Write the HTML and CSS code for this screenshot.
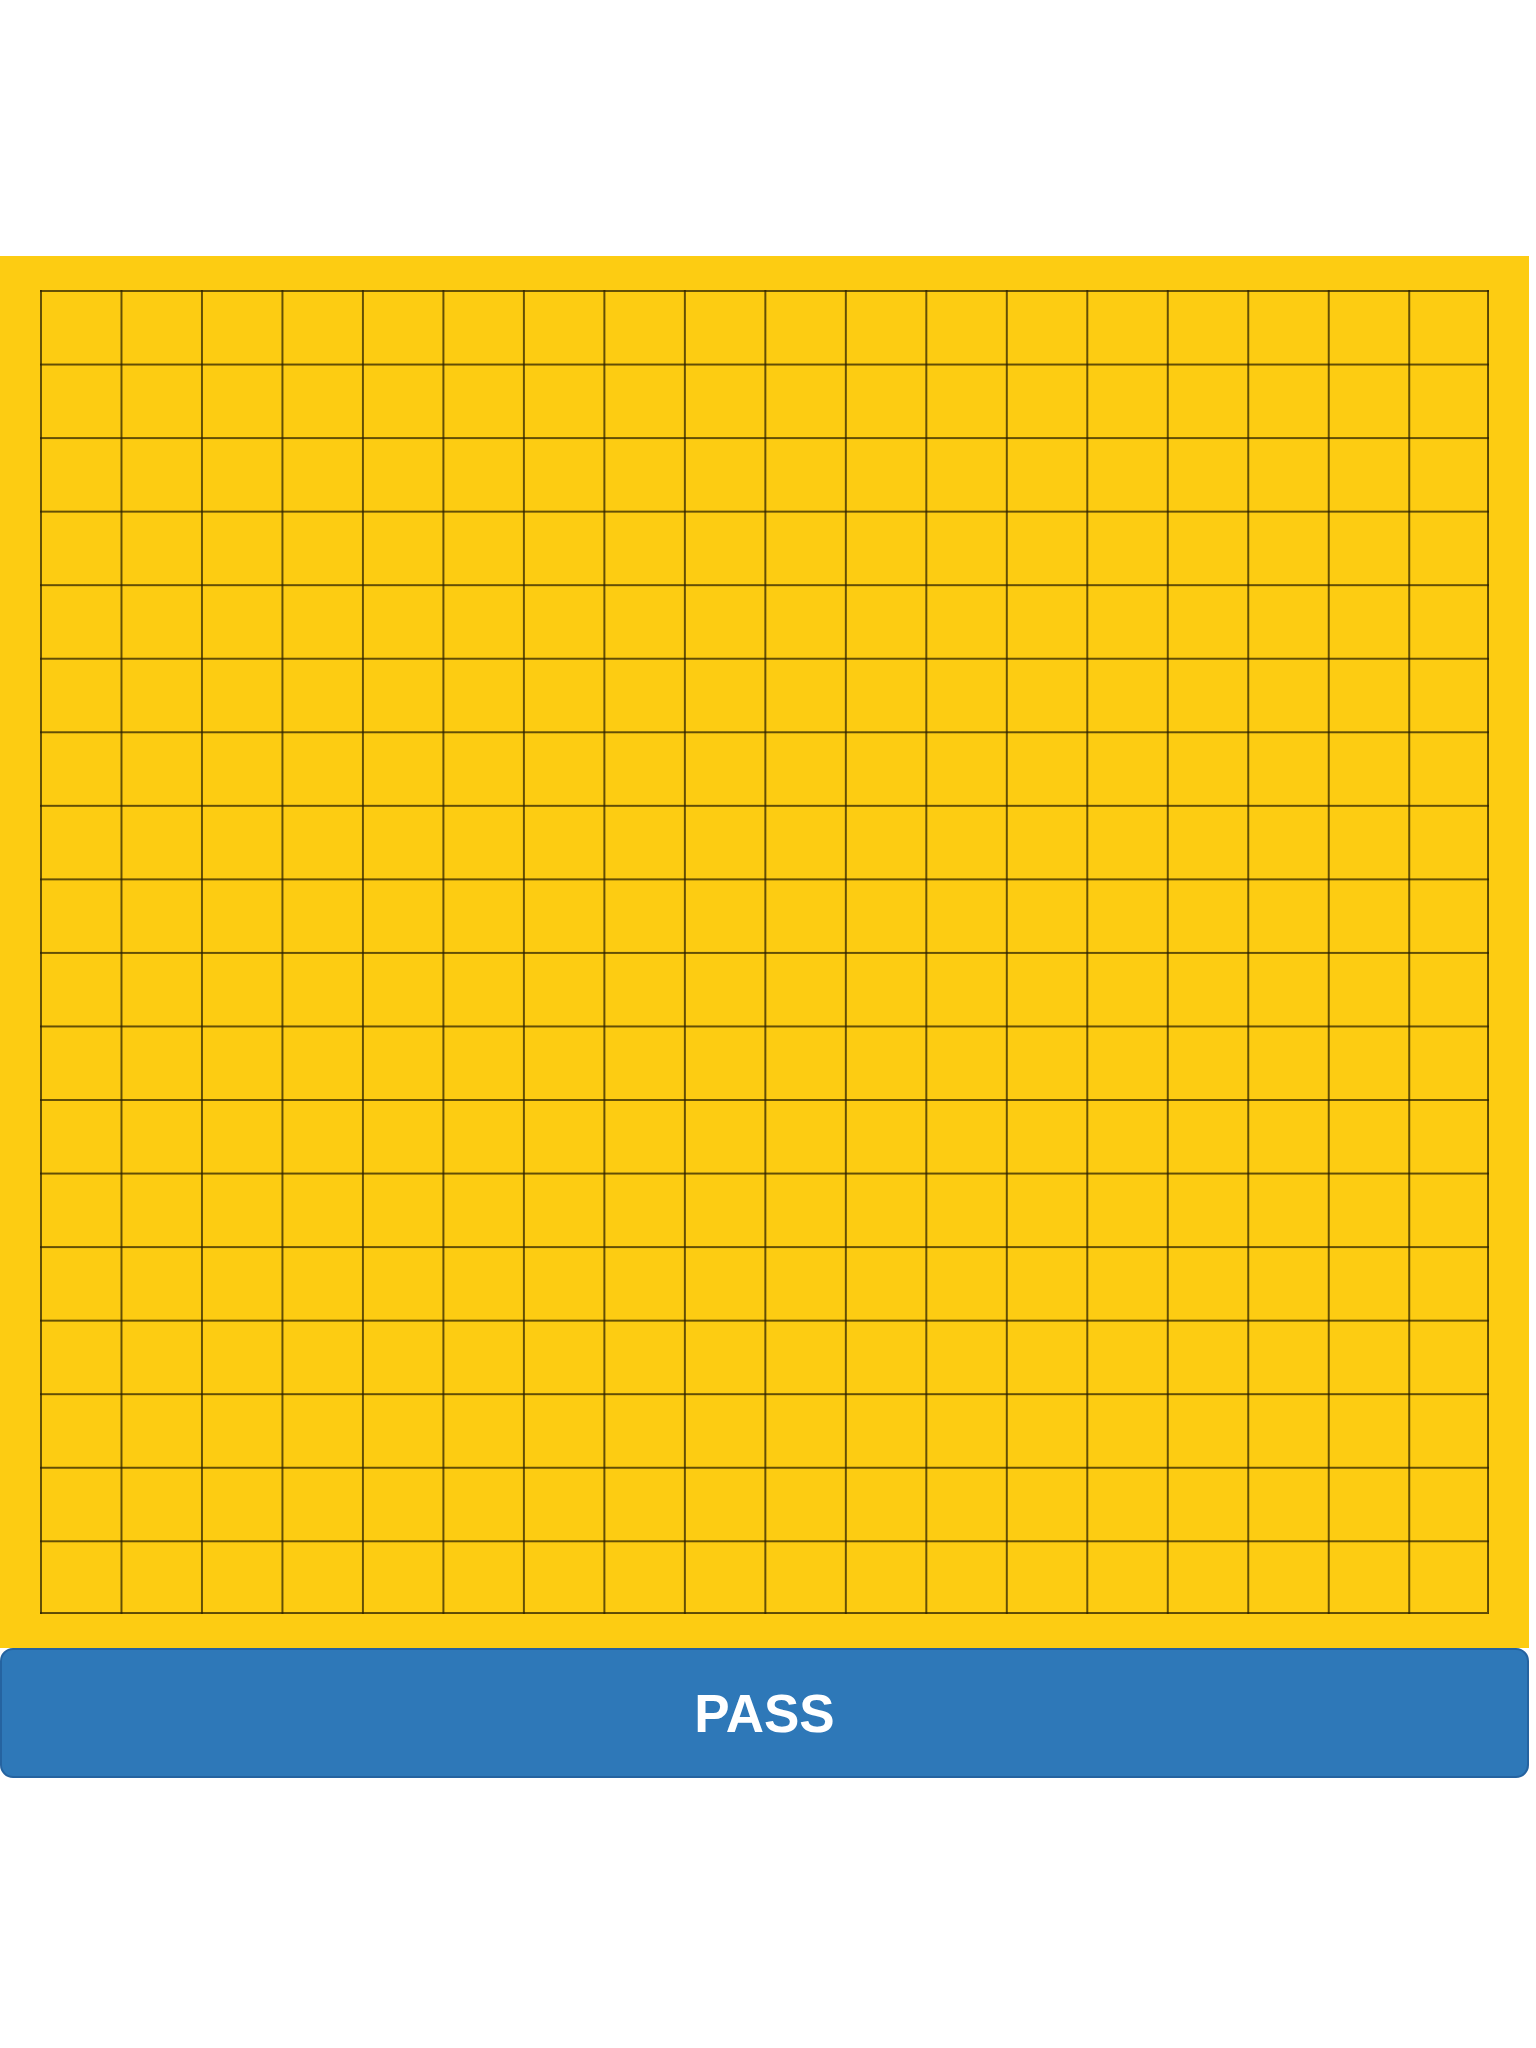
FILE: index.html
```html
<!DOCTYPE html>
<html>
<head>
<meta charset="utf-8">
<link rel="stylesheet" href="styles.css">
</head>
<body>
<div class="page">
  <div class="board">
    <div class="grid"></div>
  </div>
  <button class="pass">PASS</button>
</div>
</body>
</html>
```
FILE: styles.css
```css
html, body {
  margin: 0;
  padding: 0;
  background: #ffffff;
}
.page {
  width: 1529px;
  padding-top: 256px;
  display: flex;
  flex-direction: column;
}
.board {
  background: #fdcc12;
  height: 1392px;
  padding: 34px 40px 0 40px;
  box-sizing: border-box;
}
.grid {
  width: 1449px;
  height: 1324px;
  box-sizing: border-box;
  border-right: 2px solid rgba(40, 30, 0, 0.72);
  border-bottom: 2px solid rgba(40, 30, 0, 0.72);
  background-image:
    linear-gradient(to right, rgba(40, 30, 0, 0.72) 2px, transparent 2px),
    linear-gradient(to bottom, rgba(40, 30, 0, 0.72) 2px, transparent 2px);
  background-size: calc(100% / 18) calc(100% / 18);
  background-origin: border-box;
  background-clip: border-box;
}
.pass {
  height: 130px;
  width: 1529px;
  margin: 0;
  border: 2px solid #2563a0;
  border-radius: 13px;
  background: #2e78b8;
  color: #ffffff;
  font-family: "Liberation Sans", Arial, sans-serif;
  font-size: 53px;
  font-weight: bold;
  padding: 0;
}
```
